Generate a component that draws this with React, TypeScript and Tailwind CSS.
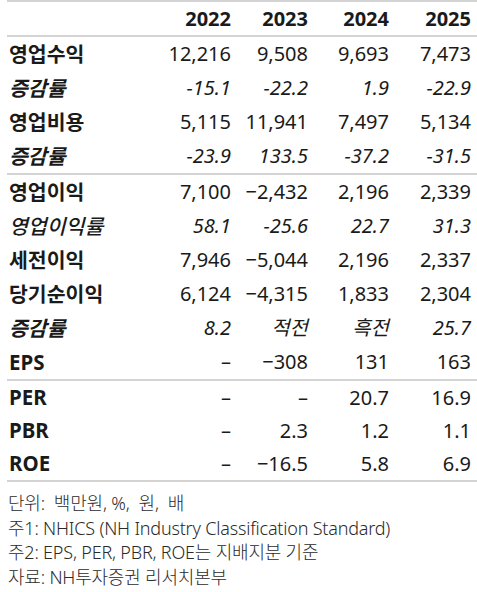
type Row = {
  label: string
  values: string[]
  italic?: boolean
  labelClass?: string
}

const groups: Row[][] = [
  [
    { label: '영업수익', values: ['12,216', '9,508', '9,693', '7,473'] },
    { label: '증감률', values: ['-15.1', '-22.2', '1.9', '-22.9'], italic: true },
    { label: '영업비용', values: ['5,115', '11,941', '7,497', '5,134'] },
    { label: '증감률', values: ['-23.9', '133.5', '-37.2', '-31.5'], italic: true },
  ],
  [
    { label: '영업이익', values: ['7,100', '-2,432', '2,196', '2,339'] },
    { label: '영업이익률', values: ['58.1', '-25.6', '22.7', '31.3'], italic: true, labelClass: 'font-medium' },
    { label: '세전이익', values: ['7,946', '-5,044', '2,196', '2,337'] },
    { label: '당기순이익', values: ['6,124', '-4,315', '1,833', '2,304'] },
    { label: '증감률', values: ['8.2', '적전', '흑전', '25.7'], italic: true },
    { label: 'EPS', values: ['-', '-308', '131', '163'] },
  ],
  [
    { label: 'PER', values: ['-', '-', '20.7', '16.9'] },
    { label: 'PBR', values: ['-', '2.3', '1.2', '1.1'] },
    { label: 'ROE', values: ['-', '-16.5', '5.8', '6.9'] },
  ],
]

const cols = 'grid grid-cols-[143px_79px_77px_81px_82px] items-center pl-[2px]'

function fmt(v: string) {
  // the report uses a wide minus sign
  return v.startsWith('-') && v.length > 1 ? '\u2212' + v.slice(1) : v === '-' ? '\u2013' : v
}

function DataRow({ row, h }: { row: Row; h: string }) {
  return (
    <div className={`${cols} ${h}`}>
      <div className={`${row.labelClass ?? 'font-bold'} ${row.italic ? 'italic' : ''} text-[20.5px]`}>{row.label}</div>
      {row.values.map((v, i) => (
        <div key={i} className={`text-right ${row.italic ? 'italic' : ''}`}>
          {fmt(v)}
        </div>
      ))}
    </div>
  )
}

export default function App() {
  return (
    <div
      className="w-[477px] h-[592px] bg-white text-[#1a1a1a] overflow-hidden"
      style={{ fontFamily: '"Noto Sans", "Noto Sans CJK KR", sans-serif' }}
    >
      <div className="ml-[7px] border-t-2 border-[#d4d4d4] text-[20px] leading-none">
        <div className={`${cols} h-[33px] font-bold`}>
          <div />
          <div className="text-right">2022</div>
          <div className="text-right">2023</div>
          <div className="text-right">2024</div>
          <div className="text-right">2025</div>
        </div>
        {groups.map((g, gi) => (
          <div key={gi} className="border-t-2 border-[#d4d4d4]">
            {g.map((r, ri) => (
              <DataRow key={ri} row={r} h={gi === 2 ? 'h-[33px]' : 'h-[34px]'} />
            ))}
          </div>
        ))}
        <div className="border-t-2 border-[#d4d4d4]" />
      </div>

      <div className="pl-[8px] pt-[9px] text-[18px] leading-[24.5px] tracking-[-0.2px] text-[#2a2a2a] font-light">
        <div>단위: &nbsp;백만원, %, &nbsp;원, &nbsp;배</div>
        <div>주1: NHICS (NH Industry Classification Standard)</div>
        <div>주2: EPS, PER, PBR, ROE는 지배지분 기준</div>
        <div>자료: NH투자증권 리서치본부</div>
      </div>
    </div>
  )
}
